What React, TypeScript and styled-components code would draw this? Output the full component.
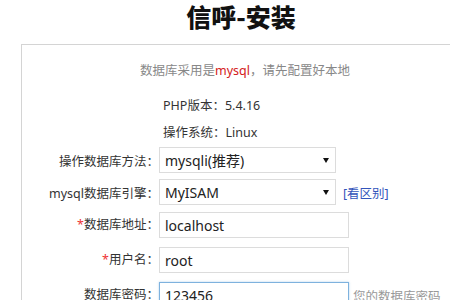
import React from "react"
import styled, { createGlobalStyle } from "styled-components"

const GlobalStyle = createGlobalStyle`
  html, body {
    margin: 0;
    padding: 0;
    background: #fff;
    overflow: hidden;
  }
  body {
    font-family: "Noto Sans", "Noto Sans CJK SC", sans-serif;
    color: #333;
  }
`

const Page = styled.div`
  width: 440px;
  margin-left: 21px;
`
const Title = styled.h1`
  margin: 0;
  height: 44px;
  padding-top: 1px;
  box-sizing: border-box;
  line-height: 30px;
  text-align: center;
  font-family: "Noto Sans CJK SC", sans-serif;
  font-size: 25px;
  font-weight: 900;
  color: #111;
`
const Panel = styled.div`
  border: 1px solid #d4d4d4;
  border-bottom: none;
  padding-top: 16px;
  height: 300px;
`
const Notice = styled.div`
  line-height: 20px;
  font-size: 12.5px;
  color: #888;
  text-align: center;
  margin-bottom: 10px;
  padding-left: 8px;
`
const Red = styled.span`
  color: #d42020;
`
const Row = styled.div<{ $h: number; $top?: number }>`
  display: flex;
  align-items: ${(p) => (p.$top ? "flex-start" : "center")};
  height: ${(p) => p.$h}px;
  padding-top: ${(p) => p.$top || 0}px;
  box-sizing: border-box;
  font-size: 12.5px;
`
const Label = styled.label<{ $lh?: number }>`
  flex: 0 0 137px;
  text-align: right;
  white-space: nowrap;
  color: #333;
  line-height: ${(p) => (p.$lh ? `${p.$lh}px` : "normal")};
`
const Star = styled.span`
  color: #e33;
`
const Info = styled.div`
  padding-left: 141px;
  white-space: nowrap;
`
const SelectBox = styled.div`
  position: relative;
  width: 177px;
  height: 26px;
  box-sizing: border-box;
  border: 1px solid #dcdcdc;
  display: flex;
  align-items: center;
  padding-left: 5px;
  font-size: 14px;
  color: #222;
  &::after {
    content: "";
    position: absolute;
    right: 6px;
    top: 10px;
    border-left: 3px solid transparent;
    border-right: 3px solid transparent;
    border-top: 5px solid #111;
  }
`
const Input = styled.input<{ $focus?: boolean }>`
  width: 190px;
  height: 26px;
  box-sizing: border-box;
  border: 1px solid ${(p) => (p.$focus ? "#7eb2de" : "#dcdcdc")};
  box-shadow: ${(p) => (p.$focus ? "0 0 2px rgba(102,163,220,0.5)" : "none")};
  padding: 0 5px;
  margin: 0;
  font-family: "Noto Sans", "Noto Sans CJK SC", sans-serif;
  font-size: 14px;
  color: #222;
  outline: none;
`
const Link = styled.a`
  margin-left: 7px;
  color: #3355bb;
  font-size: 12.5px;
  text-decoration: none;
`
const Hint = styled.span`
  margin-left: 4px;
  color: #999;
  font-size: 12.5px;
  line-height: 30px;
  white-space: nowrap;
`

export default function App() {
  return (
    <Page>
      <GlobalStyle />
      <Title>信呼-安装</Title>
      <Panel>
        <Notice>
          数据库采用是<Red>mysql</Red>，请先配置好本地
        </Notice>
        <Row $h={27}>
          <Info>PHP版本：5.4.16</Info>
        </Row>
        <Row $h={26}>
          <Info>操作系统：Linux</Info>
        </Row>
        <Row $h={32}>
          <Label>操作数据库方法：</Label>
          <SelectBox>mysqli(推荐)</SelectBox>
        </Row>
        <Row $h={32}>
          <Label>mysql数据库引擎：</Label>
          <SelectBox>MyISAM</SelectBox>
          <Link>[看区别]</Link>
        </Row>
        <Row $h={35} $top={4}>
          <Label $lh={26}>
            <Star>*</Star>数据库地址：
          </Label>
          <Input defaultValue="localhost" />
        </Row>
        <Row $h={35} $top={4}>
          <Label $lh={26}>
            <Star>*</Star>用户名：
          </Label>
          <Input defaultValue="root" />
        </Row>
        <Row $h={35} $top={4}>
          <Label $lh={26}>数据库密码：</Label>
          <Input $focus defaultValue="123456" />
          <Hint>您的数据库密码</Hint>
        </Row>
      </Panel>
    </Page>
  )
}
